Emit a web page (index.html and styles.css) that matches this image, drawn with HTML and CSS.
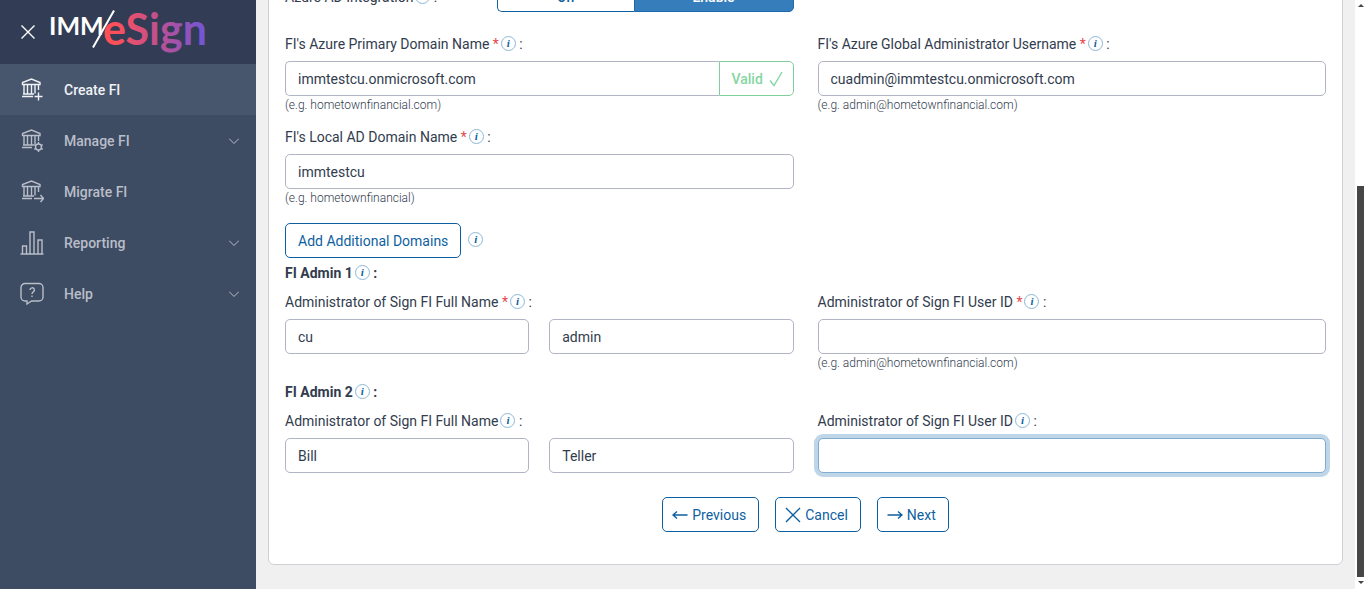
FILE: index.html
```html
<!DOCTYPE html>
<html lang="en">
<head>
    <meta charset="UTF-8">
    <meta name="viewport" content="width=device-width, initial-scale=1.0">
    <title>IMM eSign - Create FI</title>
    <link rel="stylesheet" href="styles.css">
</head>
<body>

    <!-- Shared icon shapes -->
    <svg class="sprite" aria-hidden="true">
        <symbol id="bank" viewBox="0 0 24 24">
            <path d="M2.500 6.500v-2L11.500 1l8.500 3.500v2zM4 7v8.500M7.500 7v8.500M11.500 7v8.500M15 7v8.500M18.500 7v5M3 16h11"/>
        </symbol>
        <symbol id="chevron" viewBox="0 0 10 6">
            <path d="M0 .5l5 5 5-5"/>
        </symbol>
    </svg>

    <nav class="sidebar">
        <div class="brand">
            <button class="close-menu" type="button" aria-label="Close menu">
                <svg width="14" height="14" viewBox="0 0 14 14"><path d="M.5.5l13 13M13.500.5L.5 13.500"/></svg>
            </button>
            <svg class="logo" width="160" height="50" viewBox="0 0 160 50">
                <defs>
                    <linearGradient id="logo-colors" gradientUnits="userSpaceOnUse" x1="55" y1="0" x2="157" y2="0">
                        <stop offset="0.1" stop-color="#ff5058"/>
                        <stop offset="0.5" stop-color="#c4508c"/>
                        <stop offset="1" stop-color="#6f56d8"/>
                    </linearGradient>
                </defs>
                <text class="logo-imm" x="0" y="28">IMM</text>
                <path class="logo-slash" d="M44 40.500L65 3.500"/>
                <text class="logo-esign" x="54" y="38" fill="url(#logo-colors)">eSign</text>
            </svg>
        </div>

        <a class="nav-item active" href="#">
            <svg class="nav-icon" width="24" height="24" viewBox="0 0 24 24"><use href="#bank"/><path d="M2 18.500h11M18.500 14.500v8M14.500 18.500h8"/></svg>
            <span>Create FI</span>
        </a>
        <a class="nav-item" href="#">
            <svg class="nav-icon" width="24" height="24" viewBox="0 0 24 24"><use href="#bank"/><path d="M2 18.500h10M18.500 13v2M18.500 21v2M14.300 15.600l1.700 1M21 19.400l1.700 1M14.300 20.400l1.700-1M21 16.600l1.700-1"/><circle cx="18.500" cy="18" r="3"/></svg>
            <span>Manage FI</span>
            <svg class="chevron" width="10" height="6"><use href="#chevron"/></svg>
        </a>
        <a class="nav-item" href="#">
            <svg class="nav-icon" width="24" height="24" viewBox="0 0 24 24"><use href="#bank"/><path d="M2 18.500h10M14 18.500h9.500M20.500 15l3 3.500-3 3.500"/></svg>
            <span>Migrate FI</span>
        </a>
        <a class="nav-item" href="#">
            <svg class="nav-icon" width="24" height="24" viewBox="0 0 24 24"><path d="M.5 23h23M2.500 23v-8h4v8M10 23V1h4v22M18 23V9h4v14"/></svg>
            <span>Reporting</span>
            <svg class="chevron" width="10" height="6"><use href="#chevron"/></svg>
        </a>
        <a class="nav-item" href="#">
            <svg class="nav-icon" width="24" height="24" viewBox="0 0 24 24"><path d="M5 1.500h14a4 4 0 0 1 4 4V15a4 4 0 0 1-4 4h-7.500L7 22v-3H5a4 4 0 0 1-4-4V5.500a4 4 0 0 1 4-4z"/><path d="M10 8a2.200 2.200 0 1 1 3.300 1.900c-.9.600-1.300 1-1.300 2.200M12 13.500v1.500"/></svg>
            <span>Help</span>
            <svg class="chevron" width="10" height="6"><use href="#chevron"/></svg>
        </a>
    </nav>

    <main class="content">
        <form class="panel">

            <div class="toggle-row">
                <div class="toggle-field">
                    <span class="label">Azure AD Integration<i class="info">i</i> :</span>
                    <div class="toggle">
                        <button type="button">On</button>
                        <button type="button" class="selected">Enable</button>
                    </div>
                </div>
            </div>

            <div class="row">
                <div class="field">
                    <label class="label" for="primary-domain">FI's Azure Primary Domain Name <b class="required">*</b><i class="info">i</i> :</label>
                    <div class="input-group">
                        <input type="text" id="primary-domain" value="immtestcu.onmicrosoft.com">
                        <span class="valid">Valid
                            <svg width="14" height="16" viewBox="0 0 14 16"><path d="M1 9.500L5 14.500 13 1"/></svg>
                        </span>
                    </div>
                    <small class="hint">(e.g. hometownfinancial.com)</small>
                </div>
                <div class="field">
                    <label class="label" for="global-admin">FI's Azure Global Administrator Username <b class="required">*</b><i class="info">i</i> :</label>
                    <input type="text" id="global-admin" value="cuadmin@immtestcu.onmicrosoft.com">
                    <small class="hint">(e.g. admin@hometownfinancial.com)</small>
                </div>
            </div>

            <div class="row domain-row">
                <div class="field">
                    <label class="label" for="local-domain">FI's Local AD Domain Name <b class="required">*</b><i class="info">i</i> :</label>
                    <input type="text" id="local-domain" value="immtestcu">
                    <small class="hint">(e.g. hometownfinancial)</small>
                </div>
            </div>

            <div class="add-domains">
                <button type="button" class="btn">Add Additional Domains</button>
                <i class="info">i</i>
            </div>

            <h2 class="label admin-title">FI Admin 1<i class="info">i</i> :</h2>
            <div class="row">
                <div class="field">
                    <label class="label" for="admin1-first">Administrator of Sign FI Full Name <b class="required">*</b><i class="info">i</i> :</label>
                    <div class="names">
                        <input type="text" id="admin1-first" value="cu">
                        <input type="text" aria-label="Last name" value="admin">
                    </div>
                </div>
                <div class="field">
                    <label class="label" for="admin1-user">Administrator of Sign FI User ID <b class="required">*</b><i class="info">i</i> :</label>
                    <input type="text" id="admin1-user">
                    <small class="hint">(e.g. admin@hometownfinancial.com)</small>
                </div>
            </div>

            <h2 class="label admin-title second">FI Admin 2<i class="info">i</i> :</h2>
            <div class="row">
                <div class="field">
                    <label class="label" for="admin2-first">Administrator of Sign FI Full Name<i class="info">i</i> :</label>
                    <div class="names">
                        <input type="text" id="admin2-first" value="Bill">
                        <input type="text" aria-label="Last name" value="Teller">
                    </div>
                </div>
                <div class="field">
                    <label class="label" for="admin2-user">Administrator of Sign FI User ID<i class="info">i</i> :</label>
                    <input type="text" id="admin2-user" class="focused">
                </div>
            </div>

            <div class="actions">
                <button type="button" class="btn">
                    <svg width="16" height="10" viewBox="0 0 16 10"><path d="M15.500 5H1M5 1.500L1 5l4 3.500"/></svg>
                    Previous
                </button>
                <button type="button" class="btn">
                    <svg width="16" height="16" viewBox="0 0 16 16"><path d="M1 1l14 14M15 1L1 15"/></svg>
                    Cancel
                </button>
                <button type="button" class="btn">
                    <svg width="16" height="10" viewBox="0 0 16 10"><path d="M.5 5H15M11 1.500L15 5l-4 3.500"/></svg>
                    Next
                </button>
            </div>
        </form>
    </main>

    <div class="scrollbar">
        <span class="arrow up"></span>
        <span class="track"><span class="thumb"></span></span>
        <span class="arrow down"></span>
    </div>

</body>
</html>
```

FILE: styles.css
```css
* {
    box-sizing: border-box;
}

body {
    margin: 0;
    height: 100vh;
    display: flex;
    overflow: hidden;
    font-family: Roboto, "Liberation Sans", sans-serif;
    font-size: 14px;
    line-height: 20px;
    color: #323c4e;
    background-color: #f0f0f0;
}

svg {
    fill: none;
    stroke: currentColor;
    flex: none;
}

.sprite {
    position: absolute;
    width: 0;
    height: 0;
}

/* Sidebar */
.sidebar {
    flex: none;
    width: 256px;
    background-color: #3d4b63;
}

.brand {
    height: 64px;
    display: flex;
    align-items: center;
    gap: 14px;
    padding: 0 0 1px 21px;
    background-color: #323c54;
}

.close-menu {
    display: flex;
    padding: 0;
    border: none;
    background: none;
    color: white;
    cursor: pointer;
}

.close-menu svg,
.nav-icon,
.valid svg,
.actions svg {
    stroke-width: 1.4;
}

.logo text {
    font-family: Lato, sans-serif;
    font-weight: bold;
    stroke: none;
}

.logo-imm {
    font-size: 25px;
    fill: white;
}

.logo-esign {
    font-size: 43px;
}

.logo-slash {
    stroke: white;
    stroke-width: 2;
}

.nav-item {
    height: 51px;
    display: flex;
    align-items: center;
    gap: 20px;
    padding: 0 17px 0 20px;
    color: #b9bec8;
    font-weight: 500;
    text-decoration: none;
}

.nav-item.active {
    background-color: #48566d;
    color: #f0f2f5;
}

.chevron {
    margin-left: auto;
}

/* Form panel, scrolled to its end */
.content {
    flex: 1;
    min-width: 0;
    display: flex;
    flex-direction: column;
    justify-content: flex-end;
    padding: 0 12px 24px;
}

.panel {
    flex: none;
    padding: 16px 16px 32px;
    border: 1px solid #cfd0d6;
    border-radius: 6px;
    background-color: white;
}

.row,
.toggle-row {
    display: grid;
    grid-template-columns: 1fr 1fr;
    column-gap: 24px;
}

.toggle-row {
    margin-bottom: 22px;
}

.domain-row {
    margin-top: 13px;
}

.field {
    display: flex;
    flex-direction: column;
}

.label {
    display: block;
    margin: 0;
    font-size: 14px;
    line-height: 20px;
    white-space: nowrap;
}

.field .label {
    margin-bottom: 7px;
}

.required {
    color: #e5484d;
    font-weight: normal;
}

.info {
    display: inline-block;
    width: 15px;
    height: 15px;
    margin: -2px 0 0 2px;
    border: 1px solid #8cb8d6;
    border-radius: 50%;
    color: #0d5f9e;
    font: italic bold 11px/13px "Liberation Serif", serif;
    text-align: center;
    vertical-align: 2px;
}

input {
    width: 100%;
    min-width: 0;
    height: 35px;
    padding: 0 12px;
    border: 1px solid #b1b4c3;
    border-radius: 5px;
    background-color: white;
    color: #323c4e;
    font: inherit;
}

input.focused,
input:focus {
    border-color: #7eadd3;
    outline: none;
    box-shadow: 0 0 0 4px #bfd6e8;
}

.hint {
    font-size: 12px;
    font-weight: 300;
    line-height: 18px;
}

.input-group {
    display: flex;
}

.input-group input {
    flex: 1;
    border-right: none;
    border-radius: 5px 0 0 5px;
}

.valid {
    display: flex;
    align-items: center;
    gap: 6px;
    width: 75px;
    padding-left: 12px;
    border: 1px solid #7fce9b;
    border-radius: 0 5px 5px 0;
    color: #85d6a2;
    font-weight: 500;
}

.names {
    display: grid;
    grid-template-columns: 1fr 1fr;
    column-gap: 20px;
}

/* Buttons */
.toggle-field {
    display: flex;
    align-items: center;
    justify-content: space-between;
}

.toggle {
    display: flex;
    width: 297px;
}

.toggle button {
    height: 30px;
    padding: 0;
    flex: 1;
    border: 1px solid #0e5f9f;
    border-right: none;
    border-radius: 5px 0 0 5px;
    background-color: white;
    color: #0e5f9f;
    font: inherit;
    font-weight: 500;
}

.toggle .selected {
    flex: none;
    width: 160px;
    border: 1px solid #1b6aad;
    border-radius: 0 5px 5px 0;
    background-color: #357ebb;
    color: white;
}

.btn {
    height: 35px;
    display: flex;
    align-items: center;
    gap: 4px;
    padding: 0 12px;
    border: 1px solid #0e5f9f;
    border-radius: 5px;
    background-color: white;
    color: #0e5f9f;
    font: inherit;
    cursor: pointer;
}

.add-domains {
    display: flex;
    align-items: center;
    gap: 5px;
    margin-top: 16px;
}

.admin-title {
    margin: 5px 0 9px;
    font-weight: bold;
}

.admin-title.second {
    margin-top: 10px;
}

.actions {
    display: flex;
    justify-content: center;
    gap: 16px;
    margin-top: 24px;
}

.actions .btn {
    padding-left: 9px;
}

/* Page scrollbar */
.scrollbar {
    flex: none;
    width: 11px;
    display: flex;
    flex-direction: column;
    align-items: center;
    padding: 4px 2px 5px;
    background-color: white;
}

.track {
    flex: 1;
    width: 7px;
    display: flex;
    flex-direction: column;
    justify-content: flex-end;
    margin: 3px 0 4px;
}

.thumb {
    height: 69%;
    background-color: #464646;
}

.arrow {
    border: 3px solid transparent;
}

.arrow.up {
    border-top: none;
    border-bottom-color: #464646;
}

.arrow.down {
    border-bottom: none;
    border-top-color: #464646;
}
```
